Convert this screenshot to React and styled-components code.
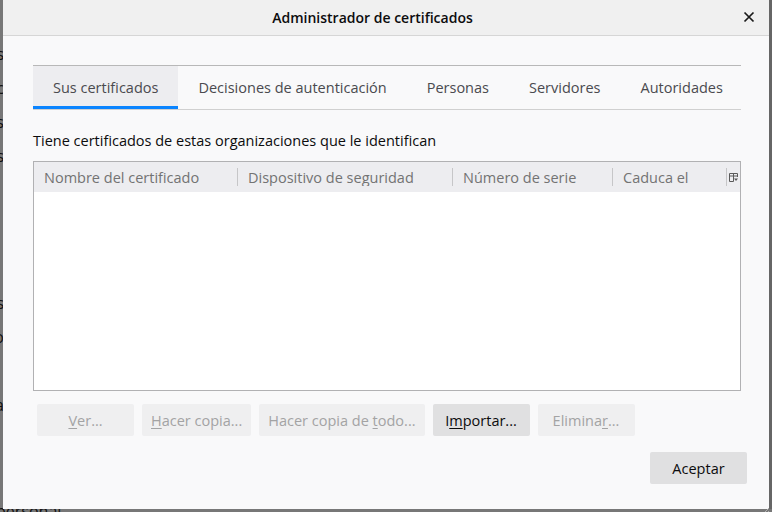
import React from "react";
import styled, { createGlobalStyle } from "styled-components";

const GlobalStyle = createGlobalStyle`
  html, body {
    margin: 0;
    padding: 0;
    background: #767676;
    overflow: hidden;
  }
  * {
    box-sizing: border-box;
  }
`;

const FONT = `"Open Sans", "Noto Sans", sans-serif`;

const Screen = styled.div`
  position: relative;
  width: 772px;
  height: 512px;
  overflow: hidden;
  background: #777777;
  font-family: ${FONT};
`;

// the page under the modal, only its right edge peeks out
const BehindPage = styled.div`
  display: flex;
  flex-direction: column;
  padding-top: 37px;
  margin-left: -60px;
  width: 64px;
  color: #111;
  font-size: 16px;
  line-height: 34px;
  text-align: right;
`;

const BehindGroup = styled.div`
  display: flex;
  flex-direction: column;
  margin-top: ${(p) => p.$gap || 0}px;
`;

const BehindFooter = styled.div`
  position: absolute;
  left: -4px;
  top: 500px;
  color: #111;
  font-size: 16px;
`;

const Dialog = styled.div`
  position: absolute;
  left: 3px;
  top: 0;
  width: 766px;
  height: 509px;
  background: #f9f9fa;
  display: flex;
  flex-direction: column;
  box-shadow: 3px 0 0 #666666;
`;

const TitleBar = styled.div`
  height: 36px;
  flex: none;
  display: flex;
  align-items: center;
  justify-content: center;
  position: relative;
  padding-right: 27px;
  background: #f0f0f0;
  border-bottom: 1px solid #d6d6d6;
  font-size: 14px;
  font-weight: 600;
  color: #0c0c0d;
`;

const CloseButton = styled.div`
  position: absolute;
  right: 12px;
  top: 9px;
  width: 16px;
  height: 16px;
  display: flex;
  align-items: center;
  justify-content: center;
`;

const Body = styled.div`
  flex: 1;
  display: flex;
  flex-direction: column;
  padding: 29px 28px 0 30px;
`;

const TabList = styled.div`
  display: flex;
  border-top: 1px solid #b8b8b8;
  border-bottom: 1px solid #d0d0d0;
`;

const Tab = styled.div`
  flex: none;
  height: 43px;
  padding: 3px 20px 0;
  display: flex;
  align-items: center;
  white-space: nowrap;
  font-size: 14.5px;
  color: #4a4a4f;
  background: ${(p) => (p.$active ? "#ededf0" : "transparent")};
  border-bottom: 3px solid ${(p) => (p.$active ? "#0a84ff" : "transparent")};
`;

const Description = styled.div`
  margin: 21px 0 10px;
  font-size: 14.5px;
  line-height: 20px;
  color: #0c0c0d;
`;

const Tree = styled.div`
  height: 230px;
  border: 1px solid #b1b1b3;
  background: #ffffff;
  display: flex;
  flex-direction: column;
`;

const TreeHeader = styled.div`
  height: 30px;
  display: grid;
  grid-template-columns: 203px 215px 160px 114px 1fr;
  background: #ededf0;
`;

const HeaderCell = styled.div`
  display: flex;
  align-items: center;
  padding-left: 10px;
  font-size: 14.5px;
  color: #737373;
  border-left: ${(p) => (p.$first ? "none" : "1px solid #c6c6c8")};
  margin: 6px 0;
  white-space: nowrap;
  overflow: hidden;
`;

const PickerCell = styled.div`
  display: flex;
  align-items: center;
  justify-content: center;
  border-left: 1px solid #c6c6c8;
  margin: 6px 0;
`;

const ButtonRow = styled.div`
  display: flex;
  gap: 8px;
  margin: 13px 0 0 4px;
`;

const Button = styled.div`
  flex: none;
  height: 32px;
  min-width: 97px;
  padding: 0 9px;
  display: flex;
  align-items: center;
  justify-content: center;
  border-radius: 2px;
  font-size: 14.5px;
  background: ${(p) => (p.$disabled ? "#efeff0" : "#e0e0e1")};
  color: ${(p) => (p.$disabled ? "#a3a3a4" : "#0c0c0d")};
  white-space: pre;

  u {
    text-decoration-thickness: 1px;
    text-underline-offset: 2px;
  }
`;

const Footer = styled.div`
  display: flex;
  justify-content: flex-end;
  margin: 16px -6px 0 0;
`;

const Grip = styled.div`
  position: absolute;
  right: 0;
  bottom: 0;
  width: 10px;
  height: 10px;
`;

const Accel = ({ text, at }) => {
  const i = text.indexOf(at);
  return (
    <>
      {text.slice(0, i)}
      <u>{at}</u>
      {text.slice(i + at.length)}
    </>
  );
};

const App = () => {
  return (
    <Screen>
      <GlobalStyle />
      <BehindPage>
        <BehindGroup>
          <span>as</span>
          <span>ac</span>
          <span>ls</span>
          <span>as</span>
        </BehindGroup>
        <BehindGroup $gap={113}>
          <span>ss</span>
          <span>lo</span>
          <span>&nbsp;</span>
          <span>la</span>
        </BehindGroup>
      </BehindPage>
      <BehindFooter>personal</BehindFooter>

      <Dialog>
        <TitleBar>
          Administrador de certificados
          <CloseButton>
            <svg width="12" height="12" viewBox="0 0 12 12">
              <path d="M1.5 1.5 L10.5 10.5 M10.5 1.5 L1.5 10.5" stroke="#1a1a1a" strokeWidth="1.7" />
            </svg>
          </CloseButton>
        </TitleBar>

        <Body>
          <TabList>
            <Tab $active>Sus certificados</Tab>
            <Tab>Decisiones de autenticación</Tab>
            <Tab>Personas</Tab>
            <Tab>Servidores</Tab>
            <Tab>Autoridades</Tab>
          </TabList>

          <Description>Tiene certificados de estas organizaciones que le identifican</Description>

          <Tree>
            <TreeHeader>
              <HeaderCell $first>Nombre del certificado</HeaderCell>
              <HeaderCell>Dispositivo de seguridad</HeaderCell>
              <HeaderCell>Número de serie</HeaderCell>
              <HeaderCell>Caduca el</HeaderCell>
              <PickerCell>
                <svg width="9" height="9" viewBox="0 0 9 9">
                  <path d="M0.5 0.5 H8.5 V4 M0.5 0.5 V8.5 H4.5 M0.5 3 H8.5 M4.5 0.5 V8.5" stroke="#5a5a5a" strokeWidth="1" fill="none" />
                  <path d="M5 5.5 H9 L7 8 Z" fill="#5a5a5a" />
                </svg>
              </PickerCell>
            </TreeHeader>
          </Tree>

          <ButtonRow>
            <Button $disabled><Accel text="Ver..." at="V" /></Button>
            <Button $disabled><Accel text="Hacer copia..." at="H" /></Button>
            <Button $disabled><Accel text="Hacer copia de todo..." at="t" /></Button>
            <Button><Accel text="Importar..." at="m" /></Button>
            <Button $disabled><Accel text="Eliminar..." at="r" /></Button>
          </ButtonRow>

          <Footer>
            <Button>Aceptar</Button>
          </Footer>
        </Body>

        <Grip>
          <svg width="10" height="10" viewBox="0 0 10 10">
            <path d="M10 2 L2 10 M10 5 L5 10 M10 8 L8 10" stroke="#b0b0b0" strokeWidth="1" />
          </svg>
        </Grip>
      </Dialog>
    </Screen>
  );
};

export default App;
